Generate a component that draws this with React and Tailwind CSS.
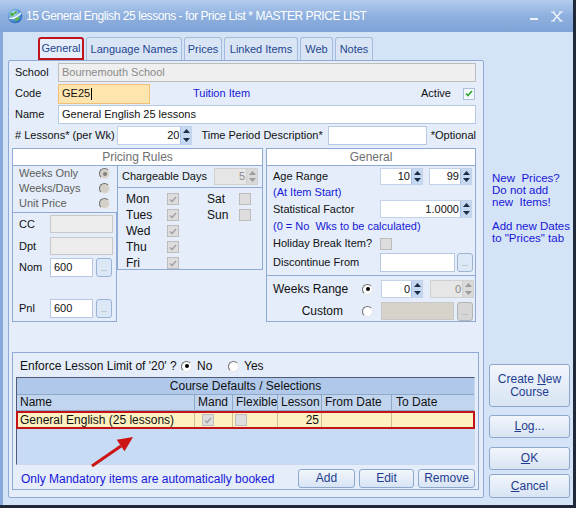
import React from "react";

const B = "border-[#8eaad5]";

function Arrows({ off }) {
  const c = off ? "#9c9c9c" : "#1d2b45";
  return (
    <div
      className={`flex w-[11px] flex-col border-l ${
        off ? "border-[#d0d0d0] bg-[#dadada]" : "border-[#a8c0e2] bg-[#c5d8f1]"
      }`}
    >
      <div className="flex flex-1 items-center justify-center">
        <svg width="7" height="4" viewBox="0 0 7 4">
          <path d="M0 4 3.5 0 7 4Z" fill={c} />
        </svg>
      </div>
      <div className="flex flex-1 items-center justify-center">
        <svg width="7" height="4" viewBox="0 0 7 4">
          <path d="M0 0 3.5 4 7 0Z" fill={c} />
        </svg>
      </div>
    </div>
  );
}

function Spin({ value, cls, off }) {
  return (
    <div
      className={`flex ${cls} border ${
        off ? "border-[#d0d0d0] bg-[#e6e6e6] text-[#8a8a8a]" : "border-[#c2d2e8] bg-white"
      }`}
    >
      <span className="flex flex-1 items-center justify-end pr-[1px]">{value}</span>
      <Arrows off={off} />
    </div>
  );
}

function Check({ checked, green }) {
  return (
    <div
      className={`flex h-[12px] w-[12px] shrink-0 items-center justify-center border ${
        green ? "border-[#a9bfde] bg-[#f4f7fb]" : "border-[#bcbcbc] bg-[#dddddd]"
      }`}
    >
      {checked && (
        <svg width="8" height="7" viewBox="0 0 8 7">
          <path
            d="M1 3.5 3 5.5 7 1"
            fill="none"
            stroke={green ? "#34a634" : "#a6a6a6"}
            strokeWidth="1.7"
          />
        </svg>
      )}
    </div>
  );
}

function Radio({ checked, off }) {
  return (
    <div
      className={`flex h-[11px] w-[11px] shrink-0 items-center justify-center rounded-full border border-t-[#6f6f6f] border-l-[#6f6f6f] border-b-[#e6e6e6] border-r-[#e6e6e6] ${
        off ? "bg-[#d4d0c8]" : "bg-white"
      }`}
    >
      {checked && (
        <div className={`h-[4px] w-[4px] rounded-full ${off ? "bg-[#808080]" : "bg-black"}`} />
      )}
    </div>
  );
}

function Dots({ off }) {
  return (
    <div
      className={`flex h-[19px] w-[16px] shrink-0 items-end justify-center rounded-[3px] border pb-[4px] ${
        off ? "border-[#b5b5b5] bg-[#d6d6d6]" : "border-[#9cb3d4] bg-[#dde8f6]"
      }`}
    >
      <span className="text-[7px] leading-none text-[#7a7a7a]">...</span>
    </div>
  );
}

function Btn({ children, cls }) {
  return (
    <div
      className={`flex flex-col items-center justify-center rounded-[3px] border border-[#8ea8cc] bg-gradient-to-b from-[#f2f6fc] to-[#d8e4f4] text-[12px] leading-[13px] text-[#1e3d8f] ${cls}`}
    >
      {children}
    </div>
  );
}

function Globe() {
  return (
    <svg width="16" height="16" viewBox="0 0 16 16">
      <defs>
        <radialGradient id="g" cx="0.4" cy="0.35" r="0.7">
          <stop offset="0" stopColor="#bfe6ff" />
          <stop offset="1" stopColor="#1b63b5" />
        </radialGradient>
      </defs>
      <circle cx="8" cy="8" r="7.3" fill="url(#g)" />
      <path d="M3 5c2-1 3 1 4 0s1-2 3-1c-1 2-3 2-4 4-1 1-2 0-3-3Z" fill="#4caf3a" />
      <path d="M9 9c2 0 3 1 4 0-1 3-3 4-4 4s-1-2 0-4Z" fill="#5bbb45" />
      <path d="M2 10c3 1 7 0 12-5" stroke="#fff" strokeWidth="1.3" fill="none" />
    </svg>
  );
}

function Tab({ children, cls, active }) {
  return (
    <div
      className={`flex h-[23px] items-center justify-center rounded-t-[3px] border ${cls} ${
        active
          ? "border-2 border-[#c0141c] bg-[#e4edf9]"
          : "border-b-0 border-[#a3bcde] bg-[#d9e5f5]"
      } text-[#24468f]`}
    >
      {children}
    </div>
  );
}

export default function App() {
  return (
    <div className="relative h-[508px] w-[576px] bg-[#20293a] font-['Liberation_Sans',Arial,sans-serif] text-[11px] text-[#111]">
      <div className="flex h-[505px] w-[573px] flex-col">
        {/* title bar */}
        <div className="flex h-[32px] shrink-0 items-center bg-gradient-to-b from-[#b4cced] via-[#8eb0df] to-[#7fa3d6] pl-[7px]">
          <Globe />
          <span className="ml-[3px] text-[12px] tracking-[-0.45px] text-white">
            15 General English 25 lessons - for Price List * MASTER PRICE LIST
          </span>
          <div className="ml-auto mr-[10px] flex items-center gap-[12px]">
            <svg width="9" height="10" viewBox="0 0 9 10">
              <rect x="0" y="7" width="8" height="2" fill="#eef3fb" />
            </svg>
            <svg width="12" height="11" viewBox="0 0 12 11">
              <path d="M2 1 10 10M10 1 2 10" stroke="#eef3fb" strokeWidth="1.5" />
              <path d="M0 1h4M8 1h4M0 10h4M8 10h4" stroke="#eef3fb" strokeWidth="1" />
            </svg>
          </div>
        </div>

        <div className="flex flex-1 border-l-[3px] border-[#86a8da] bg-[#d5e3f6]">
          {/* left column */}
          <div className="ml-[5px] flex w-[476px] flex-col">
            <div className="flex h-[28px] items-end gap-[2px] pl-[30px]">
              <Tab cls="w-[46px]" active>
                General
              </Tab>
              <Tab cls="w-[96px]">Language Names</Tab>
              <Tab cls="w-[38px]">Prices</Tab>
              <Tab cls="w-[74px]">Linked Items</Tab>
              <Tab cls="w-[33px]">Web</Tab>
              <Tab cls="w-[38px]">Notes</Tab>
            </div>

            <div className={`flex h-[438px] flex-col rounded-[2px] border ${B} bg-[#e4edf9] pl-[3px] pt-[2px]`}>
              {/* top rows */}
              <div className="flex w-[464px] flex-col gap-[2px]">
                <div className="flex h-[19px] items-center">
                  <span className="w-[46px] pl-[3px]">School</span>
                  <div className="flex h-[19px] w-[418px] items-center border border-[#bdbdbd] bg-[#efefef] pl-[3px] text-[#8a8a8a]">
                    Bournemouth School
                  </div>
                </div>
                <div className="flex h-[19px] items-center">
                  <span className="w-[46px] pl-[3px]">Code</span>
                  <div className="flex h-[20px] w-[92px] items-center border border-[#f1bf78] bg-[#fee5ad] pl-[3px]">
                    GE25
                    <span className="ml-[1px] h-[12px] w-[1px] bg-black" />
                  </div>
                  <span className="ml-[43px] text-[#1818d8]">Tuition Item</span>
                  <span className="ml-auto">Active</span>
                  <div className="ml-[12px] mr-[1px]">
                    <Check checked green />
                  </div>
                </div>
                <div className="flex h-[19px] items-center">
                  <span className="w-[46px] pl-[3px]">Name</span>
                  <div className="flex h-[19px] w-[418px] items-center border border-[#b6c9e3] bg-white pl-[3px]">
                    General English 25 lessons
                  </div>
                </div>
                <div className="flex h-[19px] items-center">
                  <span className="w-[105px] pl-[3px]">
                    # Lessons* (per Wk)
                  </span>
                  <Spin value="20" cls="h-[19px] w-[76px]" />
                  <span className="ml-[9px] w-[127px] whitespace-nowrap">
                    Time Period Description*
                  </span>
                  <div className="h-[19px] w-[99px] border border-[#b6c9e3] bg-white" />
                  <span className="ml-[4px]">*Optional</span>
                </div>
              </div>

              {/* groups */}
              <div className="mt-[3px] flex h-[174px] gap-[3px]">
                {/* pricing rules */}
                <div className="flex w-[251px] flex-col">
                  <div className={`flex h-[18px] items-center justify-center border ${B} bg-white text-[12px] text-[#6f6f6f]`}>
                    Pricing Rules
                  </div>
                  <div className="flex">
                    <div className="flex w-[105px] flex-col">
                      <div className={`flex h-[46px] flex-col border-l ${B} text-[#5e5e5e]`}>
                        {[
                          ["Weeks Only", true],
                          ["Weeks/Days", false],
                          ["Unit Price", false],
                        ].map(([t, c]) => (
                          <div key={t} className="flex h-[15px] items-center pl-[6px] pr-[7px]">
                            <span className="flex-1">{t}</span>
                            <Radio checked={c} off />
                          </div>
                        ))}
                      </div>
                      <div className={`flex h-[110px] flex-col border ${B} pl-[6px] pt-[2px]`}>
                        <div className="flex h-[18px] items-center">
                          <span className="w-[31px]">CC</span>
                          <div className="h-[18px] w-[63px] border border-[#c8c8c8] bg-[#ededed]" />
                        </div>
                        <div className="mt-[4px] flex h-[18px] items-center">
                          <span className="w-[31px]">Dpt</span>
                          <div className="h-[18px] w-[63px] border border-[#c8c8c8] bg-[#ededed]" />
                        </div>
                        <div className="mt-[3px] flex h-[19px] items-center">
                          <span className="w-[31px]">Nom</span>
                          <div className="flex h-[19px] w-[43px] items-center border border-[#b6c9e3] bg-white pl-[3px]">
                            600
                          </div>
                          <div className="ml-[3px]">
                            <Dots />
                          </div>
                        </div>
                        <div className="mt-[22px] flex h-[19px] items-center">
                          <span className="w-[31px]">Pnl</span>
                          <div className="flex h-[19px] w-[43px] items-center border border-[#b6c9e3] bg-white pl-[3px]">
                            600
                          </div>
                          <div className="ml-[3px]">
                            <Dots />
                          </div>
                        </div>
                      </div>
                    </div>
                    <div className="flex w-[146px] flex-col">
                      <div className={`flex h-[22px] items-center border-x border-b ${B} pl-[4px] pr-[4px]`}>
                        <span className="flex-1 whitespace-nowrap">Chargeable Days</span>
                        <Spin value="5" cls="h-[17px] w-[44px]" off />
                      </div>
                      <div className={`flex h-[82px] flex-col border-x border-b ${B} pl-[8px] pt-[3px]`}>
                        {[
                          ["Mon", "Sat"],
                          ["Tues", "Sun"],
                          ["Wed", null],
                          ["Thu", null],
                          ["Fri", null],
                        ].map(([a, b]) => (
                          <div key={a} className="flex h-[16px] items-center">
                            <span className="w-[41px] text-[12px]">{a}</span>
                            <Check checked />
                            {b && (
                              <>
                                <span className="ml-[28px] w-[32px] text-[12px]">{b}</span>
                                <Check />
                              </>
                            )}
                          </div>
                        ))}
                      </div>
                    </div>
                  </div>
                </div>

                {/* general */}
                <div className="flex w-[210px] flex-col">
                  <div className={`flex h-[18px] items-center justify-center border ${B} bg-white text-[12px] text-[#6f6f6f]`}>
                    General
                  </div>
                  <div className={`flex h-[110px] flex-col border-x border-b ${B} pl-[6px] pt-[2px]`}>
                    <div className="flex h-[17px] items-center">
                      <span className="w-[107px]">Age Range</span>
                      <Spin value="10" cls="h-[17px] w-[43px]" />
                      <div className="ml-[6px]">
                        <Spin value="99" cls="h-[17px] w-[43px]" />
                      </div>
                    </div>
                    <div className="flex h-[14px] items-center text-[#1818d8]">
                      (At Item Start)
                    </div>
                    <div className="mt-[1px] flex h-[18px] items-center">
                      <span className="w-[107px]">Statistical Factor</span>
                      <Spin value="1.0000" cls="h-[18px] w-[92px]" />
                    </div>
                    <div className="flex h-[17px] items-center text-[#1818d8]">
                      (0 = No &nbsp;Wks to be calculated)
                    </div>
                    <div className="flex h-[17px] items-center">
                      <span className="w-[107px]">Holiday Break Item?</span>
                      <Check />
                    </div>
                    <div className="mt-[1px] flex h-[19px] items-center">
                      <span className="w-[107px]">Discontinue From</span>
                      <div className="h-[19px] w-[75px] border border-[#b6c9e3] bg-white" />
                      <div className="ml-[2px]">
                        <Dots />
                      </div>
                    </div>
                  </div>
                  <div className={`flex h-[46px] flex-col border-x border-b ${B} pl-[6px]`}>
                    <div className="mt-[4px] flex h-[18px] items-center">
                      <span className="w-[70px] whitespace-nowrap text-right text-[12px]">
                        Weeks Range
                      </span>
                      <div className="ml-[19px]">
                        <Radio checked />
                      </div>
                      <div className="ml-[8px]">
                        <Spin value="0" cls="h-[18px] w-[42px]" />
                      </div>
                      <div className="ml-[7px]">
                        <Spin value="0" cls="h-[18px] w-[44px]" off />
                      </div>
                    </div>
                    <div className="mt-[4px] flex h-[18px] items-center">
                      <span className="w-[70px] text-right text-[12px]">Custom</span>
                      <div className="ml-[19px]">
                        <Radio />
                      </div>
                      <div className="ml-[8px] h-[18px] w-[73px] border border-[#c8c8c8] bg-[#d7d3cb]" />
                      <div className="ml-[3px]">
                        <Dots off />
                      </div>
                    </div>
                  </div>
                </div>
              </div>

              {/* course defaults */}
              <div className={`mt-[30px] flex h-[138px] w-[467px] flex-col border ${B}`}>
                <div className="mt-[6px] flex h-[14px] items-center pl-[7px]">
                  <span className="w-[161px] text-[12px]">Enforce Lesson Limit of '20' ?</span>
                  <Radio checked />
                  <span className="ml-[5px] w-[31px] text-[12px]">No</span>
                  <Radio />
                  <span className="ml-[5px] text-[12px]">Yes</span>
                </div>
                <div className="ml-[3px] mt-[4px] flex h-[88px] w-[459px] flex-col border border-b-[#c9d8ec] border-l-[#4d5c74] border-r-[#c9d8ec] border-t-[#4d5c74] bg-[#c7dbf4]">
                  <div className="flex h-[17px] items-center justify-center border-b border-[#8fa8c8] bg-[#b0c8ea] text-[12px]">
                    Course Defaults / Selections
                  </div>
                  <div className="flex h-[16px] border-b border-[#8fa8c8] bg-[#c2d5ef] text-[12px]">
                    <span className="w-[178px] border-r border-[#8fa8c8] pl-[3px] leading-[15px]">Name</span>
                    <span className="w-[38px] border-r border-[#8fa8c8] pl-[3px] leading-[15px]">Mand</span>
                    <span className="w-[45px] border-r border-[#8fa8c8] pl-[3px] leading-[15px]">Flexible</span>
                    <span className="w-[44px] border-r border-[#8fa8c8] pl-[3px] leading-[15px]">Lesson</span>
                    <span className="w-[70px] border-r border-[#8fa8c8] pl-[3px] leading-[15px]">From Date</span>
                    <span className="flex-1 pl-[4px] leading-[15px]">To Date</span>
                  </div>
                  <div className="-mx-[1px] flex h-[18px] border-2 border-[#c4121b] bg-[#fff0bf] text-[12px]">
                    <span className="flex w-[177px] items-center border-r border-[#cdbf96] pl-[2px]">
                      General English (25 lessons)
                    </span>
                    <span className="flex w-[38px] items-center border-r border-[#cdbf96] pl-[7px]">
                      <Check checked />
                    </span>
                    <span className="flex w-[45px] items-center border-r border-[#cdbf96] pl-[2px]">
                      <Check />
                    </span>
                    <span className="flex w-[44px] items-center justify-end border-r border-[#cdbf96] pr-[2px]">
                      25
                    </span>
                    <span className="w-[70px] border-r border-[#cdbf96]" />
                    <span className="flex-1" />
                  </div>
                </div>
                <div className="ml-[3px] mt-[4px] flex h-[19px] w-[459px] items-center">
                  <span className="pl-[5px] text-[12px] text-[#1818d8]">
                    Only Mandatory items are automatically booked
                  </span>
                  <div className="ml-auto flex gap-[4px]">
                    <Btn cls="h-[19px] w-[57px]">Add</Btn>
                    <Btn cls="h-[19px] w-[55px]">Edit</Btn>
                    <Btn cls="h-[19px] w-[57px]">Remove</Btn>
                  </div>
                </div>
              </div>
            </div>
          </div>

          {/* right column */}
          <div className="flex flex-1 flex-col pl-[5px]">
            <div className="ml-[3px] mt-[140px] whitespace-nowrap text-[11.5px] leading-[12px] text-[#1818d8]">
              <div>New &nbsp;Prices?</div>
              <div>Do not add</div>
              <div>new &nbsp;Items!</div>
              <div className="mt-[12px]">Add new Dates</div>
              <div>to "Prices" tab</div>
            </div>
            <Btn cls="mt-[120px] h-[43px] w-[81px]">
              <span>
                Create <span className="underline">N</span>ew
              </span>
              <span>Course</span>
            </Btn>
            <Btn cls="mt-[8px] h-[23px] w-[81px]">
              <span>
                <span className="underline">L</span>og...
              </span>
            </Btn>
            <Btn cls="mt-[9px] h-[23px] w-[81px]">
              <span>
                <span className="underline">O</span>K
              </span>
            </Btn>
            <Btn cls="mt-[4px] h-[24px] w-[81px]">
              <span>
                <span className="underline">C</span>ancel
              </span>
            </Btn>
          </div>
        </div>
      </div>

      {/* annotation arrow */}
      <svg
        className="pointer-events-none absolute left-0 top-0"
        width="576"
        height="508"
        viewBox="0 0 576 508"
      >
        <path d="M92 466 121 446" stroke="#cc1414" strokeWidth="3" />
        <path d="M133 437 124.5 451.3 116.7 439.7Z" fill="#cc1414" />
      </svg>
    </div>
  );
}
